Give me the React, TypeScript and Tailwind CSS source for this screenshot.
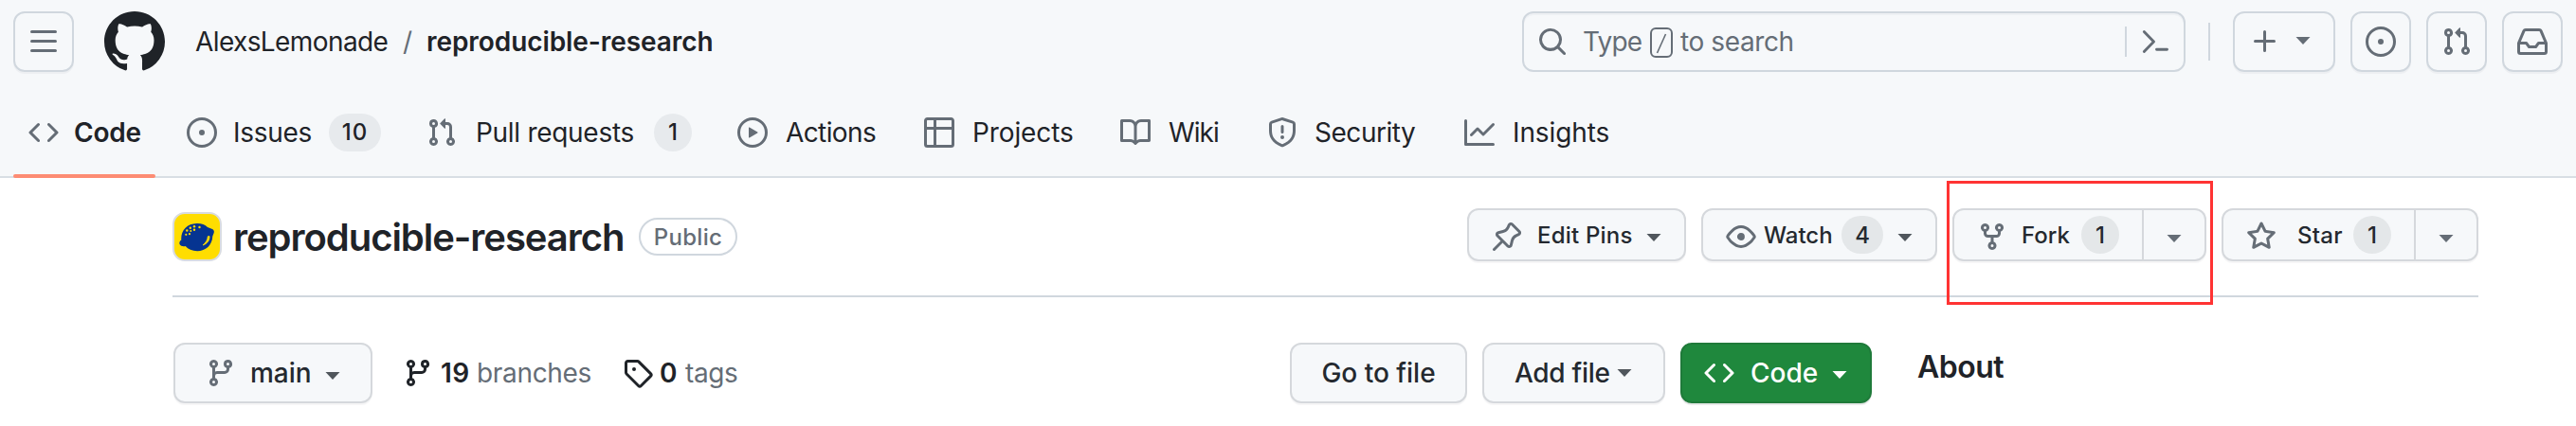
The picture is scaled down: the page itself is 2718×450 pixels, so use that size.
import React from 'react';

const ICONS = {
  menu: 'M1 2.75A.75.75 0 0 1 1.75 2h12.5a.75.75 0 0 1 0 1.5H1.75A.75.75 0 0 1 1 2.75Zm0 5A.75.75 0 0 1 1.75 7h12.5a.75.75 0 0 1 0 1.5H1.75A.75.75 0 0 1 1 7.75ZM1.75 12h12.5a.75.75 0 0 1 0 1.5H1.75a.75.75 0 0 1 0-1.5Z',
  github:
    'M8 0c4.42 0 8 3.58 8 8a8.013 8.013 0 0 1-5.45 7.59c-.4.08-.55-.17-.55-.38 0-.27.01-1.13.01-2.2 0-.75-.25-1.23-.54-1.48 1.78-.2 3.65-.88 3.65-3.95 0-.88-.31-1.59-.82-2.15.08-.2.36-1.02-.08-2.12 0 0-.67-.22-2.2.82-.64-.18-1.32-.27-2-.27-.68 0-1.36.09-2 .27-1.53-1.03-2.2-.82-2.2-.82-.44 1.1-.16 1.92-.08 2.12-.51.56-.82 1.28-.82 2.15 0 3.06 1.86 3.75 3.64 3.95-.23.2-.44.55-.51 1.07-.46.21-1.61.55-2.33-.66-.15-.24-.6-.83-1.23-.82-.67.01-.27.38.01.53.34.19.73.9.82 1.13.16.45.68 1.31 2.69.94 0 .67.01 1.3.01 1.49 0 .21-.15.45-.55.38A7.995 7.995 0 0 1 0 8c0-4.42 3.58-8 8-8Z',
  code: 'm11.28 3.22 4.25 4.25a.75.75 0 0 1 0 1.06l-4.25 4.25a.749.749 0 0 1-1.275-.326.749.749 0 0 1 .215-.734L13.94 8l-3.72-3.72a.749.749 0 0 1 .326-1.275.749.749 0 0 1 .734.215Zm-6.56 0a.751.751 0 0 1 1.042.018.751.751 0 0 1 .018 1.042L2.06 8l3.72 3.72a.749.749 0 0 1-.326 1.275.749.749 0 0 1-.734-.215L.47 8.53a.75.75 0 0 1 0-1.06Z',
  issue:
    'M8 9.5a1.5 1.5 0 1 0 0-3 1.5 1.5 0 0 0 0 3ZM8 0a8 8 0 1 1 0 16A8 8 0 0 1 8 0ZM1.5 8a6.5 6.5 0 1 0 13 0 6.5 6.5 0 0 0-13 0Z',
  pull: 'M1.5 3.25a2.25 2.25 0 1 1 3 2.122v5.256a2.251 2.251 0 1 1-1.5 0V5.372A2.25 2.25 0 0 1 1.5 3.25Zm5.677-.177L9.573.677A.25.25 0 0 1 10 .854V2.5h1A2.5 2.5 0 0 1 13.5 5v5.628a2.251 2.251 0 1 1-1.5 0V5a1 1 0 0 0-1-1h-1v1.646a.25.25 0 0 1-.427.177L7.177 3.427a.25.25 0 0 1 0-.354ZM3.75 2.5a.75.75 0 1 0 0 1.5.75.75 0 0 0 0-1.5Zm0 9.5a.75.75 0 1 0 0 1.5.75.75 0 0 0 0-1.5Zm8.25.75a.75.75 0 1 0 1.5 0 .75.75 0 0 0-1.5 0Z',
  play: 'M8 0a8 8 0 1 1 0 16A8 8 0 0 1 8 0ZM1.5 8a6.5 6.5 0 1 0 13 0 6.5 6.5 0 0 0-13 0Zm4.879-2.773 4.264 2.559a.25.25 0 0 1 0 .428l-4.264 2.559A.25.25 0 0 1 6 10.559V5.442a.25.25 0 0 1 .379-.215Z',
  table:
    'M0 1.75C0 .784.784 0 1.75 0h12.5C15.216 0 16 .784 16 1.75v12.5A1.75 1.75 0 0 1 14.25 16H1.75A1.75 1.75 0 0 1 0 14.25ZM6.5 6.5v8h7.75a.25.25 0 0 0 .25-.25V6.5Zm8-1.5V1.75a.25.25 0 0 0-.25-.25H6.5V5Zm-13 1.5v7.75c0 .138.112.25.25.25H5v-8ZM5 5V1.5H1.75a.25.25 0 0 0-.25.25V5Z',
  book: 'M0 1.75A.75.75 0 0 1 .75 1h4.253c1.227 0 2.317.59 3 1.501A3.743 3.743 0 0 1 11.006 1h4.245a.75.75 0 0 1 .75.75v10.5a.75.75 0 0 1-.75.75h-4.507a2.25 2.25 0 0 0-1.591.659l-.622.621a.75.75 0 0 1-1.06 0l-.622-.621A2.25 2.25 0 0 0 5.258 13H.75a.75.75 0 0 1-.75-.75Zm7.251 10.324.004-5.073-.002-2.253A2.25 2.25 0 0 0 5.003 2.5H1.5v9h3.757a3.75 3.75 0 0 1 1.994.574ZM8.755 4.75l-.004 7.322a3.752 3.752 0 0 1 1.992-.572H14.5v-9h-3.495a2.25 2.25 0 0 0-2.25 2.25Z',
  shield:
    'M7.467.133a1.748 1.748 0 0 1 1.066 0l5.25 1.68A1.75 1.75 0 0 1 15 3.48V7c0 1.566-.32 3.182-1.303 4.682-.983 1.498-2.585 2.813-5.032 3.855a1.697 1.697 0 0 1-1.33 0c-2.447-1.042-4.049-2.357-5.032-3.855C1.32 10.182 1 8.566 1 7V3.48a1.75 1.75 0 0 1 1.217-1.667Zm.61 1.429a.25.25 0 0 0-.153 0l-5.25 1.68a.25.25 0 0 0-.174.238V7c0 1.358.275 2.666 1.057 3.86.784 1.194 2.121 2.34 4.366 3.297a.196.196 0 0 0 .154 0c2.245-.956 3.582-2.104 4.366-3.298C13.225 9.666 13.5 8.36 13.5 7V3.48a.251.251 0 0 0-.174-.237l-5.25-1.68ZM8.75 4.75v3a.75.75 0 0 1-1.5 0v-3a.75.75 0 0 1 1.5 0ZM9 10.5a1 1 0 1 1-2 0 1 1 0 0 1 2 0Z',
  graph:
    'M1.5 1.75V13.5h13.75a.75.75 0 0 1 0 1.5H.75a.75.75 0 0 1-.75-.75V1.75a.75.75 0 0 1 1.5 0Zm14.28 2.53-5.25 5.25a.75.75 0 0 1-1.06 0L7 7.06 4.28 9.78a.751.751 0 0 1-1.042-.018.751.751 0 0 1-.018-1.042l3.25-3.25a.75.75 0 0 1 1.06 0L10 7.94l4.72-4.72a.751.751 0 0 1 1.042.018.751.751 0 0 1 .018 1.042Z',
  search:
    'M10.68 11.74a6 6 0 0 1-7.922-8.982 6 6 0 0 1 8.982 7.922l3.04 3.04a.749.749 0 0 1-.326 1.275.749.749 0 0 1-.734-.215ZM11.5 7a4.499 4.499 0 1 0-8.997 0A4.499 4.499 0 0 0 11.5 7Z',
  plus: 'M7.75 2a.75.75 0 0 1 .75.75V7h4.25a.75.75 0 0 1 0 1.5H8.5v4.25a.75.75 0 0 1-1.5 0V8.5H2.75a.75.75 0 0 1 0-1.5H7V2.75A.75.75 0 0 1 7.75 2Z',
  inbox:
    'M2.8 2.06A1.75 1.75 0 0 1 4.41 1h7.18c.7 0 1.333.417 1.61 1.06l2.74 6.395c.04.093.06.194.06.295v4.5A1.75 1.75 0 0 1 14.25 15H1.75A1.75 1.75 0 0 1 0 13.25v-4.5c0-.101.02-.202.06-.295Zm1.61.44a.25.25 0 0 0-.23.152L1.887 8H4.75a.75.75 0 0 1 .6.3L6.625 10h2.75l1.275-1.7a.75.75 0 0 1 .6-.3h2.863L11.82 2.652a.25.25 0 0 0-.23-.152Zm10.09 7h-2.875l-1.275 1.7a.75.75 0 0 1-.6.3h-3.5a.75.75 0 0 1-.6-.3L4.375 9.5H1.5v3.75c0 .138.112.25.25.25h12.5a.25.25 0 0 0 .25-.25Z',
  pin: 'm11.294.984 3.722 3.722a1.75 1.75 0 0 1-.504 2.826l-1.327.613a3.089 3.089 0 0 0-1.707 2.084l-.584 2.454c-.317 1.332-1.972 1.8-2.94.832L5.75 11.311 1.78 15.28a.749.749 0 1 1-1.06-1.06l3.969-3.97-2.204-2.204c-.968-.968-.5-2.623.832-2.94l2.454-.584a3.08 3.08 0 0 0 2.084-1.707l.613-1.327a1.75 1.75 0 0 1 2.826-.504ZM6.283 9.723l2.732 2.731a.25.25 0 0 0 .42-.119l.584-2.454a4.586 4.586 0 0 1 2.537-3.098l1.328-.613a.25.25 0 0 0 .072-.404l-3.722-3.722a.25.25 0 0 0-.404.072l-.613 1.328a4.584 4.584 0 0 1-3.098 2.537l-2.454.584a.25.25 0 0 0-.119.42l2.731 2.732Z',
  eye: 'M8 2c1.981 0 3.671.992 4.933 2.078 1.27 1.091 2.187 2.345 2.637 3.023a1.62 1.62 0 0 1 0 1.798c-.45.678-1.367 1.932-2.637 3.023C11.67 13.008 9.981 14 8 14c-1.981 0-3.671-.992-4.933-2.078C1.797 10.83.88 9.576.43 8.898a1.62 1.62 0 0 1 0-1.798c.45-.677 1.367-1.931 2.637-3.022C4.33 2.992 6.019 2 8 2ZM1.679 7.932a.12.12 0 0 0 0 .136c.411.622 1.241 1.75 2.366 2.717C5.176 11.758 6.527 12.5 8 12.5c1.473 0 2.825-.742 3.955-1.715 1.124-.967 1.954-2.096 2.366-2.717a.12.12 0 0 0 0-.136c-.412-.621-1.242-1.75-2.366-2.717C10.824 4.242 9.473 3.5 8 3.5c-1.473 0-2.825.742-3.955 1.715-1.124.967-1.954 2.096-2.366 2.717ZM8 10a2 2 0 1 1-.001-3.999A2 2 0 0 1 8 10Z',
  fork: 'M5 5.372v.878c0 .414.336.75.75.75h4.5a.75.75 0 0 0 .75-.75v-.878a2.25 2.25 0 1 1 1.5 0v.878a2.25 2.25 0 0 1-2.25 2.25h-1.5v2.128a2.251 2.251 0 1 1-1.5 0V8.5h-1.5A2.25 2.25 0 0 1 3.5 6.25v-.878a2.25 2.25 0 1 1 1.5 0ZM5 3.25a.75.75 0 1 0-1.5 0 .75.75 0 0 0 1.5 0Zm6.75.75a.75.75 0 1 0 0-1.5.75.75 0 0 0 0 1.5Zm-3 8.75a.75.75 0 1 0-1.5 0 .75.75 0 0 0 1.5 0Z',
  star: 'M8 .25a.75.75 0 0 1 .673.418l1.882 3.815 4.21.612a.75.75 0 0 1 .416 1.279l-3.046 2.97.719 4.192a.751.751 0 0 1-1.088.791L8 12.347l-3.766 1.98a.75.75 0 0 1-1.088-.79l.72-4.194L.818 6.374a.75.75 0 0 1 .416-1.28l4.21-.611L7.327.668A.75.75 0 0 1 8 .25Zm0 2.445L6.615 5.5a.75.75 0 0 1-.564.41l-3.097.45 2.24 2.184a.75.75 0 0 1 .216.664l-.528 3.084 2.769-1.456a.75.75 0 0 1 .698 0l2.77 1.456-.53-3.084a.75.75 0 0 1 .216-.664l2.24-2.183-3.096-.45a.75.75 0 0 1-.564-.41L8 2.694Z',
  branch:
    'M9.5 3.25a2.25 2.25 0 1 1 3 2.122V6A2.5 2.5 0 0 1 10 8.5H6a1 1 0 0 0-1 1v1.128a2.251 2.251 0 1 1-1.5 0V5.372a2.25 2.25 0 1 1 1.5 0v1.836A2.493 2.493 0 0 1 6 7h4a1 1 0 0 0 1-1v-.628A2.25 2.25 0 0 1 9.5 3.25Zm-6 0a.75.75 0 1 0 1.5 0 .75.75 0 0 0-1.5 0Zm8.25-.75a.75.75 0 1 0 0 1.5.75.75 0 0 0 0-1.5ZM4.25 12a.75.75 0 1 0 0 1.5.75.75 0 0 0 0-1.5Z',
  tag: 'M1 7.775V2.75C1 1.784 1.784 1 2.75 1h5.025c.464 0 .91.184 1.238.513l6.25 6.25a1.75 1.75 0 0 1 0 2.474l-5.026 5.026a1.75 1.75 0 0 1-2.474 0l-6.25-6.25A1.752 1.752 0 0 1 1 7.775Zm1.5 0c0 .066.026.13.073.177l6.25 6.25a.25.25 0 0 0 .354 0l5.025-5.025a.25.25 0 0 0 0-.354l-6.25-6.25a.25.25 0 0 0-.177-.073H2.75a.25.25 0 0 0-.25.25ZM6 5a1 1 0 1 1 0 2 1 1 0 0 1 0-2Z',
};

function Icon({ name, className = 'size-8' }: { name: keyof typeof ICONS; className?: string }) {
  return (
    <svg viewBox="0 0 16 16" className={`shrink-0 fill-current ${className}`} fillRule="evenodd" aria-hidden>
      <path d={ICONS[name]} />
    </svg>
  );
}

function Caret({ className = '' }: { className?: string }) {
  return (
    <svg viewBox="0 0 16 8" className={`h-2 w-4 shrink-0 fill-current ${className}`} aria-hidden>
      <path d="M.5 0h15L8 8Z" />
    </svg>
  );
}

function Label({ className = '', children }: { className?: string; children: React.ReactNode }) {
  return <span className={`shrink-0 whitespace-nowrap text-left ${className}`}>{children}</span>;
}

function Counter({ className = '', children }: { className?: string; children: React.ReactNode }) {
  return (
    <span className={`flex h-10 shrink-0 items-center justify-center rounded-full text-2xl font-medium ${className}`}>
      {children}
    </span>
  );
}

const box = 'flex shrink-0 items-center border-2 shadow-[0_2px_0_rgba(31,35,40,0.04)]';
const headerBtn = `${box} h-16 rounded-xl border-[#d0d7de] text-[#656d76]`;
const repoBtn = `${box} h-14 rounded-xl border-[#d5d8dc] bg-[#f6f8fa] text-2xl font-medium text-[#24292f]`;
const fileBtn = `${box} h-16 rounded-xl border-[#d5d8dc] bg-[#f6f8fa] text-[28px] font-medium text-[#24292f]`;

function TopBar() {
  return (
    <div className="flex h-[88px] items-center px-[14px]">
      <button className={`${headerBtn} w-16 justify-center`}>
        <Icon name="menu" />
      </button>
      <Icon name="github" className="ml-8 size-16" />
      <Label className="ml-8 w-[219px] tracking-[-0.6px]">AlexsLemonade</Label>
      <Label className="w-[25px] text-[#656d76]">/</Label>
      <Label className="font-semibold tracking-[-0.07px]">reproducible-research</Label>
      <div className="ml-auto flex h-16 w-[700px] items-center rounded-xl border-2 border-[#d0d7de] pl-[14px] text-[#656d76] shadow-[inset_0_2px_0_rgba(208,215,222,0.2)]">
        <Icon name="search" />
        <Label className="ml-4 w-[71px] tracking-[-0.8px]">Type</Label>
        <svg viewBox="0 0 24 32" className="mt-0.5 h-8 w-6 fill-none stroke-current" aria-hidden>
          <rect x="1" y="1" width="22" height="30" rx="5" strokeWidth="2" />
          <path d="M16.500 7 7.500 27" strokeWidth="1.600" />
        </svg>
        <Label className="ml-2 tracking-[-0.4px]">to search</Label>
        <span className="ml-auto h-8 w-[2px] bg-[#d0d7de]" />
        <svg viewBox="0 0 32 32" className="mx-[14px] size-8 fill-none stroke-current" aria-hidden>
          <path d="M4.300 5.500 14.500 16 4.300 26.500M17.500 24.300h11" strokeWidth="2.900" strokeLinecap="round" strokeLinejoin="round" />
        </svg>
      </div>
      <span className="ml-6 h-10 w-[2px] bg-[#d0d7de]" />
      <button className={`${headerBtn} ml-6 w-[108px] pl-[16px]`}>
        <Icon name="plus" />
        <Caret className="-mt-0.5 ml-4" />
      </button>
      <button className={`${headerBtn} ml-4 w-16 justify-center`}>
        <Icon name="issue" />
      </button>
      <button className={`${headerBtn} ml-4 w-16 justify-center`}>
        <Icon name="pull" />
      </button>
      <button className={`${headerBtn} ml-4 w-16 justify-center`}>
        <Icon name="inbox" />
      </button>
    </div>
  );
}

function RepoNav() {
  return (
    <nav className="flex h-[100px] items-start border-b-2 border-[#d8dee4] pl-[14px]">
      <div className="relative flex h-[100px] w-[150px] items-start pl-4">
        <div className="flex h-[104px] items-center">
          <Icon name="code" className="size-8 text-[#656d76]" />
          <Label className="ml-[16px] font-semibold tracking-[-0.22px]">Code</Label>
        </div>
        <span className="absolute bottom-0 left-0 h-1 w-[150px] rounded-full bg-[#fd8c73]" />
      </div>
      <div className="flex h-[104px] items-center">
        <Icon name="issue" className="ml-[33px] size-8 text-[#656d76]" />
        <Label className="ml-[17px] w-[101px] tracking-[-0.29px]">Issues</Label>
        <Counter className="w-[55px] bg-[#e7eaed] tracking-[1px]">10</Counter>
        <Icon name="pull" className="ml-[48px] size-8 text-[#656d76]" />
        <Label className="ml-[20px] w-[188px] tracking-[-0.29px]">Pull requests</Label>
        <Counter className="w-10 bg-[#e7eaed]">1</Counter>
        <Icon name="play" className="ml-12 size-8 text-[#656d76]" />
        <Label className="ml-[19px] w-[146px] tracking-[-0.6px]">Actions</Label>
        <Icon name="table" className="size-8 text-[#656d76]" />
        <Label className="ml-[19px] w-[156px] tracking-[-0.11px]">Projects</Label>
        <Icon name="book" className="size-8 text-[#656d76]" />
        <Label className="ml-[19px] w-[104px] tracking-[-0.9px]">Wiki</Label>
        <Icon name="shield" className="size-8 text-[#656d76]" />
        <Label className="ml-[18px] w-[158px] tracking-[-0.47px]">Security</Label>
        <Icon name="graph" className="size-8 text-[#656d76]" />
        <Label className="ml-[19px] tracking-[-0.11px]">Insights</Label>
      </div>
    </nav>
  );
}

function Avatar() {
  return (
    <svg viewBox="0 0 52 52" className="size-[52px] shrink-0" aria-hidden>
      <rect x="1" y="1" width="50" height="50" rx="12" fill="#ffdd00" stroke="#d9dce0" strokeWidth="2" />
      <path
        d="M7.500 34c-.5-2 .3-3.500 1.800-4.500C8.500 20 15 12.200 25.500 12c5-.2 8.800 1.400 11.500 4l5 2c1.800.8 2.300 2.600 1.500 4.500l-1.200 3C42 34.500 35.500 41 26.500 41.200c-5.500.1-10-2-12.800-5.200-2.200.6-5 .2-6.200-2Z"
        fill="#053491"
      />
      <path d="M39 25.500c.3 4.500-2.500 8-7 9.500 3.200-2.700 5-5.500 5.300-9.300Z" fill="#ffdd00" stroke="#ffdd00" strokeWidth=".8" strokeLinejoin="round" />
      <g fill="#ffdd00">
        <circle cx="23" cy="15.300" r="1.200" />
        <circle cx="28.500" cy="16" r="1.200" />
        <circle cx="18.800" cy="16.800" r="1.200" />
        <circle cx="23" cy="18.800" r="1.200" />
        <circle cx="15.300" cy="19.500" r="1.200" />
        <circle cx="19.300" cy="20" r="1" />
        <circle cx="18" cy="23.200" r="1.100" />
        <circle cx="14.300" cy="23.800" r="1.100" />
      </g>
    </svg>
  );
}

function RepoHeader() {
  return (
    <div className="ml-[182px] flex h-[126px] w-[2433px] items-start border-b-2 border-[#d0d7de] pt-8">
      <div className="mt-1 flex h-[52px] items-center">
        <Avatar />
        <h1 className="ml-3 w-[428px] whitespace-nowrap pt-0.5 text-[40px] font-semibold leading-[52px] tracking-[-1.04px]">
          reproducible-research
        </h1>
        <span className="flex h-10 w-[104px] items-center justify-center rounded-full border-2 border-[#d0d7de] pt-px text-2xl font-medium tracking-[0.3px] text-[#656d76]">
          Public
        </span>
      </div>
      <div className="ml-auto flex">
        <button className={`${repoBtn} w-[231px] pl-[24px]`}>
          <Icon name="pin" className="mt-1 size-8 text-[#656d76]" />
          <Label className="ml-[16px] w-[115px] pt-0.5 tracking-[0.2px]">Edit Pins</Label>
          <Caret className="mt-1.5 text-[#50565c]" />
        </button>
        <button className={`${repoBtn} ml-4 w-[249px] pl-[24px]`}>
          <Icon name="eye" className="mt-1 size-8 text-[#656d76]" />
          <Label className="ml-[8px] w-[82px] pt-0.5">Watch</Label>
          <Counter className="w-11 bg-[#e4e7e9] pt-0.5">4</Counter>
          <Caret className="ml-[15px] mt-1.5 text-[#50565c]" />
        </button>
        <div className="relative ml-4 flex">
          <button className={`${repoBtn} w-[202px] rounded-r-none pl-[24px]`}>
            <Icon name="fork" className="mt-1 size-8 text-[#656d76]" />
            <Label className="ml-[15px] w-[63px] pt-0.5">Fork</Label>
            <Counter className="w-10 bg-[#e4e7e9] pt-0.5">1</Counter>
          </button>
          <button className={`${repoBtn} w-[66px] justify-center rounded-l-none border-l-0`}>
            <Caret className="mt-2 text-[#656d76]" />
          </button>
          <span className="pointer-events-none absolute -left-[6px] -top-[29px] h-[131px] w-[281px] border-[3px] border-[#ff3333]" />
        </div>
        <div className="ml-4 flex">
          <button className={`${repoBtn} w-[205px] rounded-r-none pl-[24px]`}>
            <Icon name="star" className="mt-1 size-8 text-[#656d76]" />
            <Label className="ml-[22px] w-[59px] pt-0.5 tracking-[0.29px]">Star</Label>
            <Counter className="w-10 bg-[#e4e7e9] pt-0.5">1</Counter>
          </button>
          <button className={`${repoBtn} w-[66px] justify-center rounded-l-none border-l-0`}>
            <Caret className="mt-2 text-[#656d76]" />
          </button>
        </div>
      </div>
    </div>
  );
}

function FileBar() {
  return (
    <div className="flex items-start pl-[183px] pt-12">
      <div className="flex h-16 w-[1178px] items-center">
        <button className={`${fileBtn} w-[210px] pl-[32px]`}>
          <Icon name="branch" className="size-8 text-[#656d76]" />
          <Label className="ml-[15px] w-[79px]">main</Label>
          <Caret className="mt-1.5 text-[#50565c]" />
        </button>
        <Icon name="branch" className="ml-8 size-8" />
        <Label className="ml-[8px] w-[38px] font-semibold tracking-[0.5px]">19</Label>
        <Label className="w-[154px] tracking-[-0.33px] text-[#656d76]">branches</Label>
        <Icon name="tag" />
        <Label className="ml-[7px] w-[27px] font-semibold">0</Label>
        <Label className="tracking-[-0.4px] text-[#656d76]">tags</Label>
      </div>
      <button className={`${fileBtn} w-[187px] justify-center`}>Go to file</button>
      <button className={`${fileBtn} ml-4 w-[193px] pl-[32px]`}>
        <Label className="w-[108px] tracking-[-0.3px]">Add file</Label>
        <Caret className="text-[#50565c]" />
      </button>
      <button className="ml-4 flex h-16 w-[202px] items-center rounded-xl border-2 border-[#1f7a3a] bg-[#1f883d] pl-[23px] text-[28px] font-medium text-white shadow-[0_2px_0_rgba(31,35,40,0.1)]">
        <Icon name="code" />
        <Label className="ml-[17px] w-[86px]">Code</Label>
        <Caret className="mt-1" />
      </button>
      <h2 className="ml-12 pt-0.5 text-[32px] font-semibold leading-[48px] tracking-[-0.5px]">About</h2>
    </div>
  );
}

export default function App() {
  return (
    <div className="h-[450px] w-[2718px] overflow-hidden bg-white font-['Inter',sans-serif] text-[28px] leading-[40px] text-[#1f2328]">
      <header className="bg-[#f6f8fa]">
        <TopBar />
        <RepoNav />
      </header>
      <RepoHeader />
      <FileBar />
    </div>
  );
}
